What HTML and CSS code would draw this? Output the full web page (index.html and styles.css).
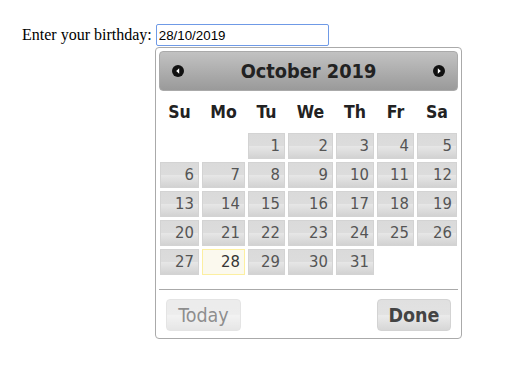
FILE: index.html
```html
<!DOCTYPE html>
<html lang="en">
<head>
    <meta charset="UTF-8">
    <title>Datepicker</title>
    <link rel="stylesheet" href="styles.css">
</head>
<body>

<div class="field">
    <label for="birthday">Enter your birthday:</label>
    <input type="text" id="birthday" value="28/10/2019">
</div>

<div class="datepicker">
    <div class="dp-header">
        <a class="dp-nav" title="Prev">
            <svg width="12" height="12" viewBox="0 0 12 12"><circle cx="6" cy="6" r="6" fill="#111"/><path d="M7.2 3.3 L4.2 6 L7.2 8.7 Z" fill="#fff"/></svg>
        </a>
        <span class="dp-title">October 2019</span>
        <a class="dp-nav" title="Next">
            <svg width="12" height="12" viewBox="0 0 12 12"><circle cx="6" cy="6" r="6" fill="#111"/><path d="M4.8 3.3 L7.8 6 L4.8 8.7 Z" fill="#fff"/></svg>
        </a>
    </div>

    <div class="dp-grid dp-weekdays">
        <span>Su</span><span>Mo</span><span>Tu</span><span>We</span><span>Th</span><span>Fr</span><span>Sa</span>
    </div>

    <div class="dp-grid dp-days">
        <span></span><span></span>
        <a class="day">1</a><a class="day">2</a><a class="day">3</a><a class="day">4</a><a class="day">5</a>
        <a class="day">6</a><a class="day">7</a><a class="day">8</a><a class="day">9</a><a class="day">10</a><a class="day">11</a><a class="day">12</a>
        <a class="day">13</a><a class="day">14</a><a class="day">15</a><a class="day">16</a><a class="day">17</a><a class="day">18</a><a class="day">19</a>
        <a class="day">20</a><a class="day">21</a><a class="day">22</a><a class="day">23</a><a class="day">24</a><a class="day">25</a><a class="day">26</a>
        <a class="day">27</a><a class="day today">28</a><a class="day">29</a><a class="day">30</a><a class="day">31</a>
    </div>

    <div class="dp-buttons">
        <button class="btn btn-today">Today</button>
        <button class="btn btn-done">Done</button>
    </div>
</div>

</body>
</html>
```

FILE: styles.css
```css
body {
    margin: 8px;
    font-family: "Liberation Serif", serif;
    font-size: 16px;
    background: #fff;
}
.field {
    display: flex;
    align-items: center;
    gap: 4px;
    padding: 16px 0 0 14px;
}
.field input {
    box-sizing: border-box;
    width: 173px;
    height: 22px;
    padding: 1px 2px;
    border: 1px solid #6f9ae6;
    border-radius: 2px;
    font-family: "Liberation Sans", Arial, sans-serif;
    font-size: 13.33px;
    color: #000;
    outline: none;
}
.datepicker {
    position: absolute;
    top: 47px;
    left: 155px;
    width: 299px;
    padding: 3px 3px 0;
    border: 1px solid #aaa;
    border-radius: 4px;
    background: #fff;
    font-family: "DejaVu Sans Condensed", "DejaVu Sans", sans-serif;
    font-stretch: condensed;
}
.dp-header {
    box-sizing: border-box;
    height: 40px;
    display: flex;
    align-items: center;
    justify-content: space-between;
    padding: 0 12px;
    border: 1px solid #aaa;
    border-radius: 4px;
    background: linear-gradient(#c2c2c2, #9a9a9a);
}
.dp-nav {
    display: flex;
}
.dp-title {
    font-size: 19.8px;
    font-weight: bold;
    color: #222;
}
.dp-grid {
    display: grid;
    grid-template-columns: 39px 43px 37px 45px 38px 37px 40px;
    column-gap: 3px;
    margin-left: 1px;
}
.dp-weekdays {
    margin-top: 9px;
    height: 24px;
    line-height: 24px;
    text-align: center;
    font-weight: bold;
    font-size: 17.5px;
    color: #222;
}
.dp-days {
    margin-top: 9px;
    grid-auto-rows: 26px;
    row-gap: 3px;
}
.day {
    box-sizing: border-box;
    padding-right: 4px;
    text-align: right;
    line-height: 24px;
    font-size: 16.5px;
    color: #555;
    border: 1px solid #d3d3d3;
    background: linear-gradient(#dadada 0, #dcdcdc 48%, #e6e6e6 52%, #d2d2d2 100%);
}
.day.today {
    border-color: #fcefa1;
    background: #fbf9ee;
    color: #363636;
}
.dp-buttons {
    display: flex;
    justify-content: space-between;
    margin-top: 14px;
    padding: 9px 7px 7px;
    border-top: 1px solid #aaa;
}
.btn {
    box-sizing: border-box;
    height: 32px;
    padding: 0;
    border: 1px solid #d3d3d3;
    border-radius: 4px;
    background: linear-gradient(#e0e0e0 0, #e2e2e2 48%, #ebebeb 52%, #d6d6d6 100%);
    font-family: "DejaVu Sans Condensed", "DejaVu Sans", sans-serif;
    font-stretch: condensed;
    font-size: 19.5px;
    color: #444;
}
.btn-today {
    width: 75px;
    opacity: 0.6;
}
.btn-done {
    width: 74px;
    font-weight: bold;
}
```
